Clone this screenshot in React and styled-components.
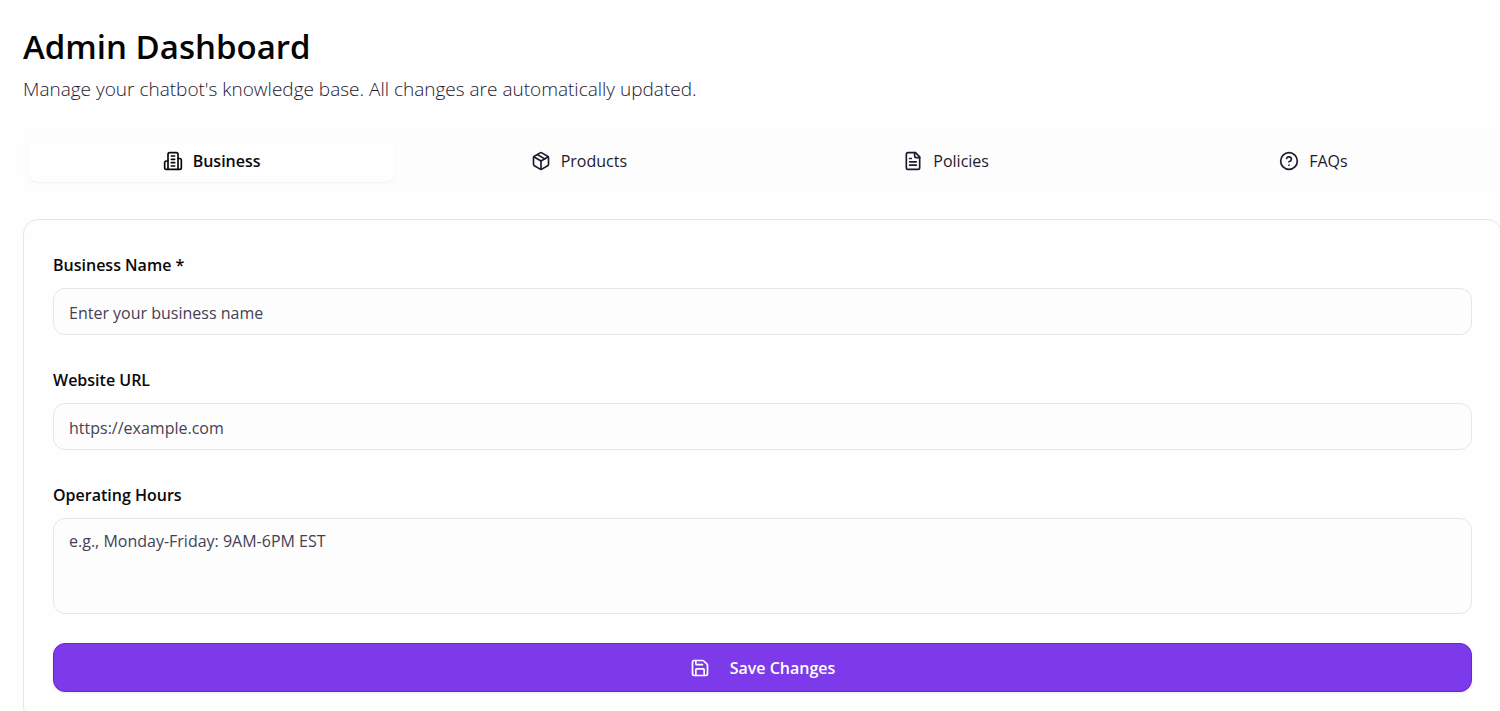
import React, { useState } from 'react';
import styled, { createGlobalStyle } from 'styled-components';
import { Package, CircleQuestionMark, Save } from 'lucide-react';

function BuildingIcon() {
  return (
    <LineIcon viewBox="0 0 24 24" aria-hidden="true">
      <path d="M6 22V4a2 2 0 0 1 2-2h8a2 2 0 0 1 2 2v18Z" />
      <path d="M6 12H4a2 2 0 0 0-2 2v6a2 2 0 0 0 2 2h2" />
      <path d="M18 9h2a2 2 0 0 1 2 2v9a2 2 0 0 1-2 2h-2" />
      <path d="M10 6h4M10 10h4M10 14h4M10 18h4" />
    </LineIcon>
  );
}

function DocumentIcon() {
  return (
    <LineIcon viewBox="0 0 24 24" aria-hidden="true">
      <path d="M15 2H6a2 2 0 0 0-2 2v16a2 2 0 0 0 2 2h12a2 2 0 0 0 2-2V7Z" />
      <path d="M14 2v4a2 2 0 0 0 2 2h4" />
      <path d="M10 9H8M16 13H8M16 17H8" />
    </LineIcon>
  );
}

const tabs = [
  { id: 'business', label: 'Business', Icon: BuildingIcon },
  { id: 'products', label: 'Products', Icon: Package },
  { id: 'policies', label: 'Policies', Icon: DocumentIcon },
  { id: 'faqs', label: 'FAQs', Icon: CircleQuestionMark },
];

export default function App() {
  const [active, setActive] = useState('business');

  return (
    <>
      <GlobalStyle />
      <Page>
        <Header>
          <Title>Admin Dashboard</Title>
          <Subtitle>
            Manage your chatbot's knowledge base. All changes are automatically updated.
          </Subtitle>
        </Header>
        <TabList role="tablist">
          {tabs.map(({ id, label, Icon }) => (
            <Tab
              key={id}
              type="button"
              role="tab"
              aria-selected={active === id}
              $active={active === id}
              onClick={() => setActive(id)}
            >
              <Icon />
              {label}
            </Tab>
          ))}
        </TabList>
        <Card onSubmit={(e) => e.preventDefault()}>
          <Field>
            <Label htmlFor="name">Business Name *</Label>
            <Input id="name" type="text" placeholder="Enter your business name" />
          </Field>
          <Field>
            <Label htmlFor="website">Website URL</Label>
            <Input id="website" type="url" placeholder="https://example.com" />
          </Field>
          <Field>
            <Label htmlFor="hours">Operating Hours</Label>
            <TextArea id="hours" placeholder="e.g., Monday-Friday: 9AM-6PM EST" />
          </Field>
          <SaveButton type="submit">
            <Save />
            Save Changes
          </SaveButton>
        </Card>
      </Page>
    </>
  );
}

const GlobalStyle = createGlobalStyle`
  * {
    box-sizing: border-box;
  }
  body {
    margin: 0;
    overflow: hidden;
    background: #fefefe;
    color: #09090b;
    font-family: 'Open Sans', 'Noto Sans', sans-serif;
  }
  button, input, textarea {
    font-family: inherit;
  }
`;

const LineIcon = styled.svg`
  fill: none;
  stroke: currentColor;
  stroke-width: 2;
  stroke-linecap: round;
  stroke-linejoin: round;
`;

const Page = styled.main`
  margin-right: -2px;
  padding: 23px 0 24px 23px;
`;

const Header = styled.header`
  margin-bottom: 29px;
`;

const Title = styled.h1`
  margin: 0;
  font-size: 33px;
  line-height: 48px;
  font-weight: 600;
  color: #050507;
`;

const Subtitle = styled.p`
  margin: 4px 0 0;
  font-size: 19px;
  line-height: 28px;
  font-weight: 300;
  color: #1d1830;
`;

const TabList = styled.div`
  display: grid;
  grid-template-columns: repeat(4, 1fr);
  padding: 5px;
  margin-bottom: 32px;
  border-radius: 12px;
  background: #fdfdfe;
`;

const Tab = styled.button`
  display: flex;
  align-items: center;
  justify-content: center;
  gap: 10px;
  height: 45px;
  padding: 2px 0 0;
  border: 0;
  border-radius: 10px;
  background: ${(p) => (p.$active ? '#fefefe' : 'transparent')};
  box-shadow: ${(p) => (p.$active ? '0 1px 2px rgba(0, 0, 0, 0.05)' : 'none')};
  color: ${(p) => (p.$active ? '#09090b' : '#1d1a2b')};
  font-size: 16px;
  font-weight: ${(p) => (p.$active ? 600 : 400)};
  cursor: pointer;
  svg {
    width: 20px;
    height: 20px;
  }
`;

const Card = styled.form`
  display: flex;
  flex-direction: column;
  gap: 29px;
  padding: 29px;
  border: 1px solid #e6e6e8;
  border-radius: 15px;
`;

const Field = styled.div`
  display: flex;
  flex-direction: column;
  gap: 7px;
`;

const Label = styled.label`
  font-size: 16px;
  line-height: 32px;
  font-weight: 600;
`;

const Input = styled.input`
  width: 100%;
  height: 47px;
  padding: 2px 15px 0;
  border: 1px solid #e6e6e8;
  border-radius: 12px;
  outline: none;
  background: #fdfdfd;
  font-size: 16px;
  &::placeholder {
    color: #454155;
    font-weight: 400;
    opacity: 1;
  }
`;

const TextArea = styled(Input).attrs({ as: 'textarea' })`
  display: block;
  height: 96px;
  padding: 10px 15px;
  line-height: 24px;
  resize: none;
`;

const SaveButton = styled.button`
  display: flex;
  align-items: center;
  justify-content: center;
  gap: 20px;
  height: 49px;
  border: 1px solid #6d1fe6;
  border-radius: 12px;
  background: #7c3aea;
  box-shadow: 0 1px 3px rgba(0, 0, 0, 0.08);
  color: #fff;
  font-size: 16px;
  font-weight: 600;
  cursor: pointer;
  svg {
    width: 20px;
    height: 20px;
  }
`;
